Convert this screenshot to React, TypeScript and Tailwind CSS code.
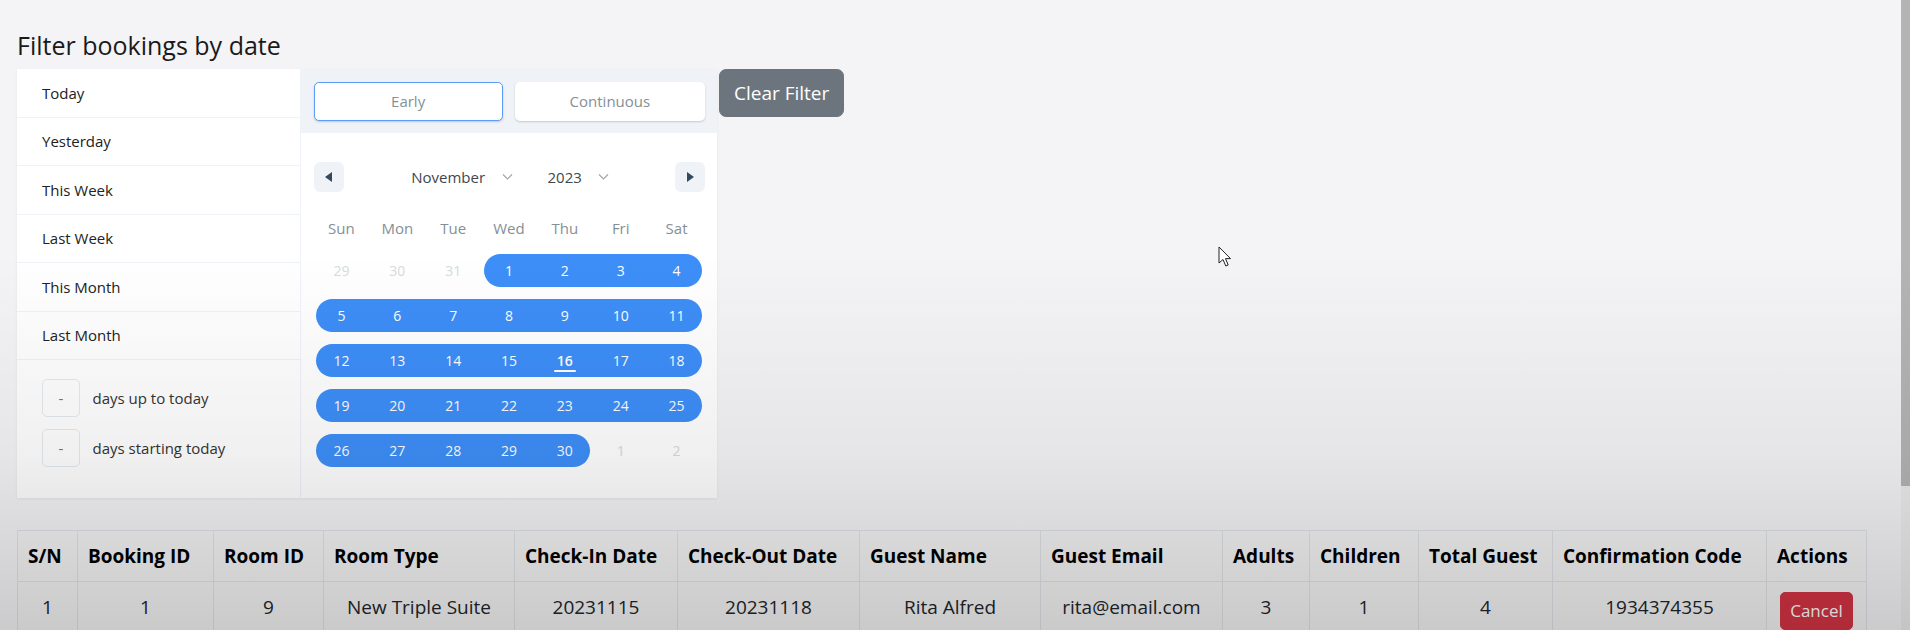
import React from "react"

const staticRanges = ["Today", "Yesterday", "This Week", "Last Week", "This Month", "Last Month"]
const inputRanges = ["days up to today", "days starting today"]
const weekDays = ["Sun", "Mon", "Tue", "Wed", "Thu", "Fri", "Sat"]
const colStart = ["col-start-1", "col-start-2", "col-start-3", "col-start-4", "col-start-5", "col-start-6", "col-start-7"]

type Day = { n: number; passive?: boolean; today?: boolean }

const weeks: { pill: string; days: Day[] }[] = [
  {
    pill: "col-start-4 col-span-4",
    days: [{ n: 29, passive: true }, { n: 30, passive: true }, { n: 31, passive: true }, { n: 1 }, { n: 2 }, { n: 3 }, { n: 4 }],
  },
  { pill: "col-start-1 col-span-7", days: [5, 6, 7, 8, 9, 10, 11].map((n) => ({ n })) },
  { pill: "col-start-1 col-span-7", days: [12, 13, 14, 15, 16, 17, 18].map((n) => ({ n, today: n === 16 })) },
  { pill: "col-start-1 col-span-7", days: [19, 20, 21, 22, 23, 24, 25].map((n) => ({ n })) },
  {
    pill: "col-start-1 col-span-5",
    days: [{ n: 26 }, { n: 27 }, { n: 28 }, { n: 29 }, { n: 30 }, { n: 1, passive: true }, { n: 2, passive: true }],
  },
]

const columns = [
  { label: "S/N", w: "w-[60px]" },
  { label: "Booking ID", w: "w-[136px]" },
  { label: "Room ID", w: "w-[110px]" },
  { label: "Room Type", w: "w-[191px]" },
  { label: "Check-In Date", w: "w-[163px]" },
  { label: "Check-Out Date", w: "w-[182px]" },
  { label: "Guest Name", w: "w-[181px]" },
  { label: "Guest Email", w: "w-[182px]" },
  { label: "Adults", w: "w-[87px]" },
  { label: "Children", w: "w-[109px]" },
  { label: "Total Guest", w: "w-[134px]" },
  { label: "Confirmation Code", w: "w-[214px]" },
  { label: "Actions", w: "w-[100px]" },
]

const row = ["1", "1", "9", "New Triple Suite", "20231115", "20231118", "Rita Alfred", "rita@email.com", "3", "1", "4", "1934374355"]

const Chevron = () => (
  <svg width="11" height="8" viewBox="0 0 11 8" className="absolute right-[10px] top-1/2 -translate-y-1/2">
    <path d="M1 1.5 L5.5 6 L10 1.5" fill="none" stroke="#0e242f" strokeOpacity="0.4" strokeWidth="1.2" />
  </svg>
)

const NavButton: React.FC<{ dir: "prev" | "next" }> = ({ dir }) => (
  <button className="mx-[12.5px] flex h-[30px] w-[30px] items-center justify-center rounded-[6px] bg-[#eff2f7]">
    <svg width="8" height="10" viewBox="0 0 8 10">
      {dir === "prev" ? <path d="M7 0 L7 10 L0 5 Z" fill="#34495e" /> : <path d="M1 0 L1 10 L8 5 Z" fill="#34495e" />}
    </svg>
  </button>
)

function DatePicker() {
  return (
    <div className="flex shadow-[0_1px_3px_rgba(0,0,0,0.06)]">
      {/* preset ranges */}
      <div className="w-[284px] border-r border-[#eff2f7] bg-white">
        {staticRanges.map((label) => (
          <div key={label} className="border-b border-[#eff2f7] px-[25px] py-[12.5px] text-[15px] leading-[22.5px] text-[#222]">
            {label}
          </div>
        ))}
        <div className="py-[12.5px]">
          {inputRanges.map((label) => (
            <div key={label} className="flex items-center px-[25px] py-[6.25px]">
              <div className="mr-[12.5px] h-[38px] w-[38px] rounded-[5px] border border-[#e4eaee] text-center text-[15px] leading-[36px] text-[#6c767a]">
                -
              </div>
              <span className="text-[15px] text-[#333]">{label}</span>
            </div>
          ))}
        </div>
      </div>

      {/* calendar */}
      <div className="flex w-[416px] flex-col bg-white">
        <div className="flex gap-[12.5px] bg-[#eff2f7] p-[12.5px]">
          <div className="h-[39px] flex-1 rounded-[5px] border border-[#5b9cf5] bg-white text-center text-[15px] leading-[37px] text-[#849095] shadow-[0_1px_2px_0_rgba(35,57,66,0.21)]">
            Early
          </div>
          <div className="h-[39px] flex-1 rounded-[5px] border border-transparent bg-white text-center text-[15px] leading-[37px] text-[#849095] shadow-[0_1px_2px_0_rgba(35,57,66,0.21)]">
            Continuous
          </div>
        </div>

        <div className="flex h-[75px] items-center justify-between pt-[12.5px]">
          <NavButton dir="prev" />
          <div className="flex flex-1 items-center justify-center">
            <div className="relative mx-[6.25px] py-[12.5px] pl-[12.5px] pr-[37.5px] text-[15px] text-[#3e484f]">
              November
              <Chevron />
            </div>
            <div className="relative mx-[6.25px] py-[12.5px] pl-[12.5px] pr-[37.5px] text-[15px] text-[#3e484f]">
              2023
              <Chevron />
            </div>
          </div>
          <NavButton dir="next" />
        </div>

        <div className="grid h-[40px] grid-cols-7 items-center px-[12.5px] text-center text-[15px] text-[#849095]">
          {weekDays.map((d) => (
            <span key={d}>{d}</span>
          ))}
        </div>

        <div className="px-[12.5px] pb-[25px]">
          {weeks.map((week, wi) => (
            <div key={wi} className="grid h-[45px] grid-cols-7">
              <div className={`${week.pill} row-start-1 mx-[2.5px] my-[6.25px] rounded-full bg-[#3d8ef8]`} />
              {week.days.map((d, di) => (
                <div
                  key={di}
                  className={`${colStart[di]} relative row-start-1 flex items-center justify-center text-[14px] ${
                    d.passive ? "text-[#d5dce0]" : "text-white"
                  } ${d.today ? "font-semibold" : ""}`}
                >
                  {d.n}
                  {d.today && <span className="absolute bottom-[11px] left-1/2 h-[2.5px] w-[22px] -translate-x-1/2 rounded-full bg-white" />}
                </div>
              ))}
            </div>
          ))}
        </div>
      </div>
    </div>
  )
}

export default function App() {
  return (
    <div className="relative flex h-[630px] overflow-hidden bg-[#f4f4f6] font-['Segoe_UI','Open_Sans',sans-serif] text-[#212529]">
      <main className="flex-1 pl-[17px] pr-[34px] pt-[30px]">
        <h5 className="mb-[9px] text-[25px] font-medium leading-[30px] text-[#1a1a1a]">Filter bookings by date</h5>

        <div className="flex items-start">
          <DatePicker />
          <button className="ml-[2px] h-[48px] rounded-[7px] border border-[#6c757d] bg-[#6c757d] px-[14px] text-[19px] leading-[30px] text-white">
            Clear Filter
          </button>
        </div>

        <table className="mt-[32px] w-[1849px] table-fixed border-collapse bg-[#f3f3f4] text-[19px]">
          <thead>
            <tr>
              {columns.map((c) => (
                <th
                  key={c.label}
                  className={`${c.w} whitespace-nowrap border border-[#dee2e6] px-[10px] py-[10px] text-left align-top font-bold leading-[30px] text-black`}
                >
                  {c.label}
                </th>
              ))}
            </tr>
          </thead>
          <tbody>
            <tr>
              {row.map((v, i) => (
                <td key={i} className="whitespace-nowrap border border-[#dee2e6] px-[10px] py-[10px] text-center align-top leading-[30px]">
                  {v}
                </td>
              ))}
              <td className="border border-[#dee2e6] px-[10px] py-[10px] text-center align-top">
                <button className="h-[38px] rounded-[5px] border border-[#d33343] bg-[#d33343] px-[9px] text-[17px] leading-[26px] text-white">
                  Cancel
                </button>
              </td>
            </tr>
          </tbody>
        </table>
      </main>

      {/* scrollbar */}
      <div className="flex w-[10px] flex-col">
        <div className="h-[486px] bg-[#b4b4b4]" />
        <div className="flex-1 bg-[#ececec]" />
      </div>

      {/* screen-capture shading */}
      <div className="pointer-events-none absolute inset-0 bg-[linear-gradient(to_bottom,rgba(0,0,0,0)_0%,rgba(0,0,0,0)_40%,rgba(0,0,0,0.06)_72%,rgba(0,0,0,0.17)_100%)]" />

      {/* mouse pointer */}
      <svg width="14" height="22" viewBox="0 0 14 22" className="pointer-events-none absolute left-[1218px] top-[246px]">
        <path d="M1 1 L1 17 L5 13.5 L7.8 20 L10.2 19 L7.5 12.6 L12.5 12.6 Z" fill="#fff" stroke="#222" strokeWidth="1" strokeLinejoin="round" />
      </svg>
    </div>
  )
}
